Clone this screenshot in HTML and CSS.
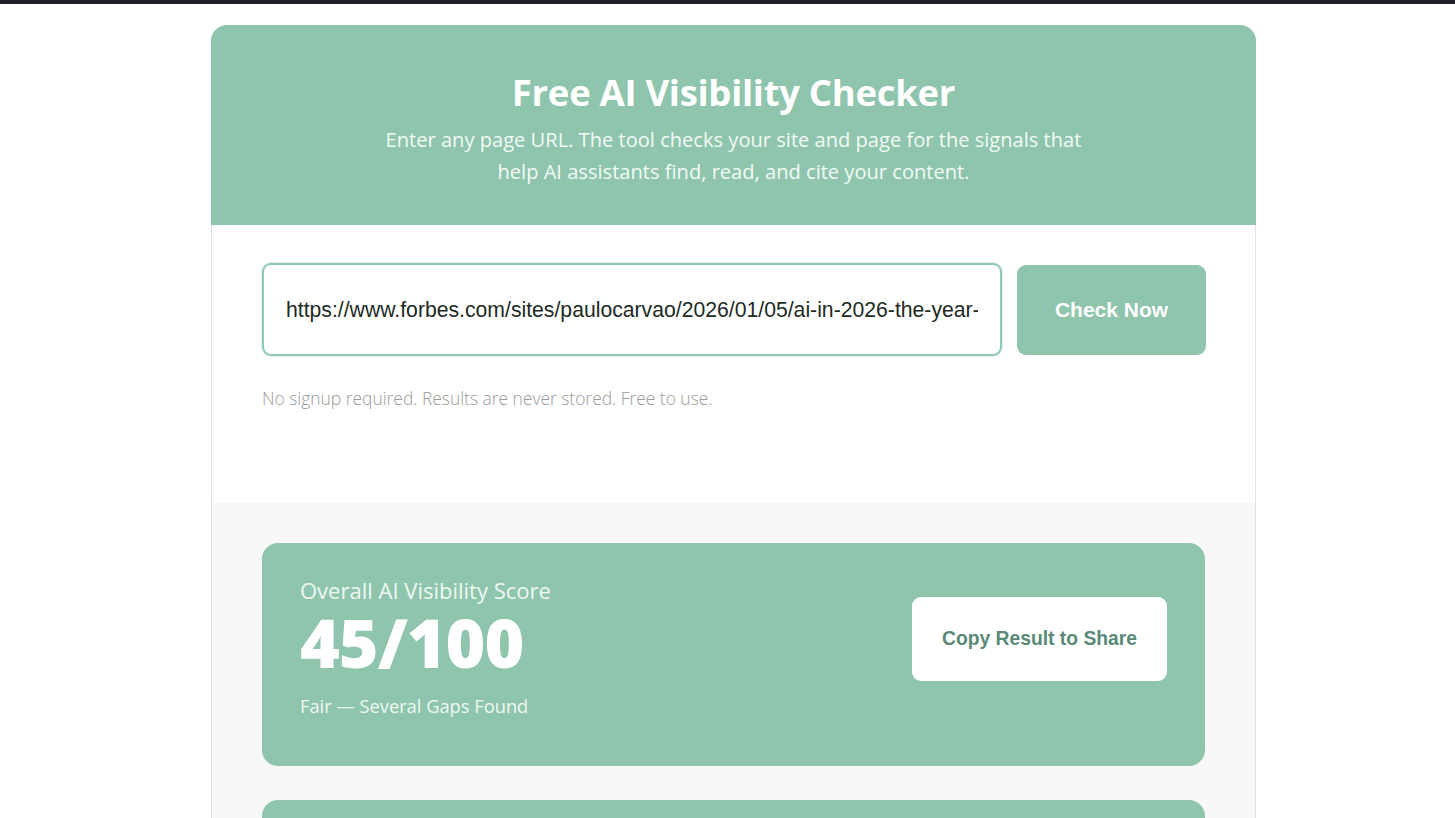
FILE: index.html
```html
<!DOCTYPE html>
<html lang="en">
<head>
<meta charset="utf-8">
<title>Free AI Visibility Checker</title>
<link rel="stylesheet" href="styles.css">
</head>
<body>
<div class="topbar"></div>
<div class="page">
  <main class="tool">
    <header class="hero">
      <h1 class="hero-title">Free AI Visibility Checker</h1>
      <p class="hero-sub">Enter any page URL. The tool checks your site and page for the signals that help AI assistants find, read, and cite your content.</p>
    </header>
    <section class="form-section">
      <form class="check-form">
        <input class="url-input" type="text" value="https://www.forbes.com/sites/paulocarvao/2026/01/05/ai-in-2026-the-year-">
        <button class="check-btn" type="button">Check Now</button>
      </form>
      <p class="note">No signup required. Results are never stored. Free to use.</p>
    </section>
    <section class="results">
      <div class="score-card">
        <div class="score-info">
          <div class="score-label">Overall AI Visibility Score</div>
          <div class="score-value">45/100</div>
          <div class="score-verdict">Fair — Several Gaps Found</div>
        </div>
        <button class="share-btn" type="button">Copy Result to Share</button>
      </div>
      <div class="next-card"></div>
    </section>
  </main>
</div>
</body>
</html>
```
FILE: styles.css
```css
* { box-sizing: border-box; }
html, body { margin: 0; padding: 0; background: #ffffff; }
body { font-family: "Open Sans", "Noto Sans", sans-serif; overflow: hidden; height: 818px; }

.topbar { height: 4px; background: #1f2327; }

.page { padding: 21px 0 0 12px; }

.tool {
  width: 1045px;
  margin: 0 auto;
  border: 1px solid #e2e2e2;
  border-top: none;
  border-radius: 16px 16px 0 0;
}

.hero {
  background: #8fc5ad;
  border-radius: 16px 16px 0 0;
  margin: 0 -1px;
  height: 200px;
  padding-top: 39px;
  text-align: center;
  color: #ffffff;
}
.hero-title {
  margin: 0;
  font-size: 36.5px;
  font-weight: 700;
  line-height: 56px;
  letter-spacing: -0.3px;
}
.hero-sub {
  margin: 4px auto 0;
  width: 740px;
  font-size: 20.1px;
  font-weight: 400;
  line-height: 32px;
  color: #f2faf6;
}

.form-section {
  background: #ffffff;
  padding: 38px 50px 0;
  height: 278px;
}
.check-form { display: flex; align-items: center; gap: 15px; }
.url-input {
  flex: 0 0 740px;
  height: 93px;
  border: 2px solid #8fc9b0;
  border-radius: 9px;
  padding: 0 22px;
  font-family: "Liberation Sans", Arial, sans-serif;
  font-size: 21.2px;
  color: #1d2a25;
  box-shadow: 0 0 0 1px rgba(143,197,173,0.25);
  outline: none;
}
.check-btn {
  flex: 0 0 189px;
  height: 90px;
  border: none;
  border-radius: 9px;
  background: #8fc5ad;
  color: #ffffff;
  font-family: "Liberation Sans", Arial, sans-serif;
  font-size: 21px;
  font-weight: 700;
}
.note {
  margin: 30px 0 0;
  font-size: 17.4px;
  font-weight: 300;
  color: #9a9a9a;
}

.results {
  background: #f8f8f8;
  padding: 40px 50px;
}
.score-card {
  background: #8fc5ad;
  border-radius: 16px;
  height: 223px;
  padding: 29px 38px 0 38px;
  display: flex;
  justify-content: space-between;
  align-items: flex-start;
}
.score-label {
  font-size: 22px;
  line-height: 36px;
  color: #eef8f3;
}
.score-value {
  margin-top: 1px;
  font-size: 68px;
  font-weight: 800;
  line-height: 66px;
  color: #ffffff;
  letter-spacing: -1px;
}
.score-verdict {
  margin-top: 18px;
  font-size: 18.3px;
  line-height: 26px;
  color: #eef8f3;
}
.share-btn {
  margin-top: 25px;
  width: 255px;
  height: 84px;
  border: none;
  border-radius: 9px;
  background: #ffffff;
  color: #5a8a77;
  font-family: "Liberation Sans", Arial, sans-serif;
  font-size: 19.3px;
  font-weight: 700;
}
.next-card {
  margin-top: 34px;
  height: 120px;
  background: #8fc5ad;
  border-radius: 16px;
}
```
